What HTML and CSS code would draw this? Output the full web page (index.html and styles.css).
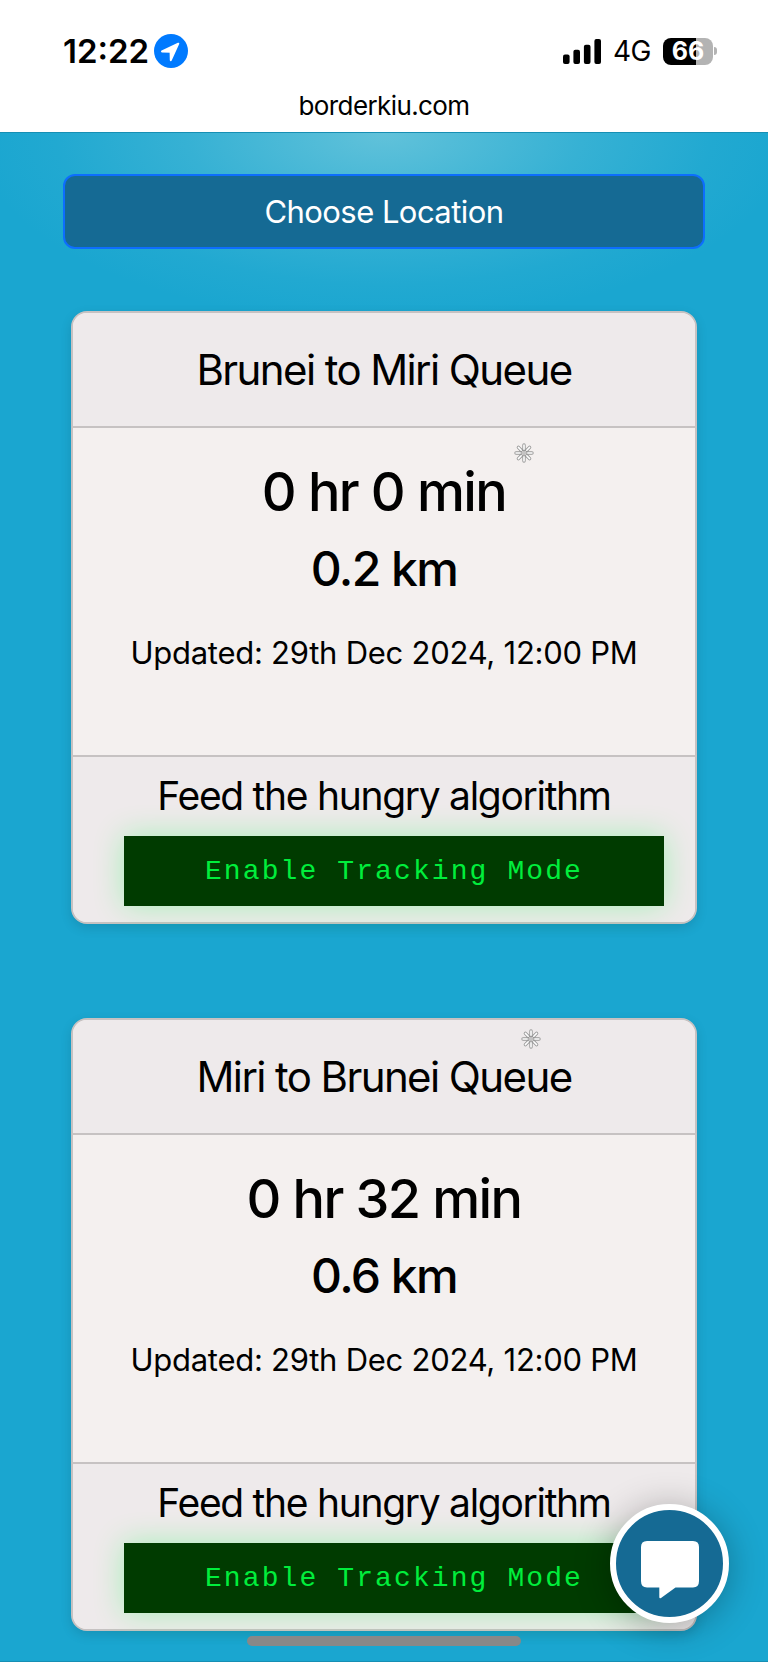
FILE: index.html
```html
<!DOCTYPE html>
<html lang="en">
<head>
    <meta charset="UTF-8">
    <meta name="viewport" content="width=device-width, initial-scale=1.0">
    <title>Border Kiu</title>
    <link rel="stylesheet" href="styles.css">
</head>
<body>
    <header class="phone-header">
        <div class="status-bar">
            <div class="status-left">
                <span class="clock">12:22</span>
                <svg class="location-icon" width="34" height="34" viewBox="0 0 34 34">
                    <circle cx="17" cy="17" r="17" fill="#007aff"/>
                    <path d="M24.3 9.7 L8 17.4 L16.6 17.8 L16.8 26.2 Z" fill="#fff" stroke="#fff" stroke-width="2" stroke-linejoin="round"/>
                </svg>
            </div>
            <div class="status-right">
                <svg class="signal-icon" width="38" height="25" viewBox="0 0 38 25">
                    <rect x="0" y="15.5" width="6.6" height="9.5" rx="2"/>
                    <rect x="10.4" y="10.7" width="6.6" height="14.3" rx="2"/>
                    <rect x="20.9" y="5.7" width="6.6" height="19.3" rx="2"/>
                    <rect x="31.4" y="0" width="6.6" height="25" rx="2"/>
                </svg>
                <span class="network">4G</span>
                <span class="battery">66</span>
                <span class="battery-tip"></span>
            </div>
        </div>
        <div class="address">borderkiu.com</div>
    </header>

    <main class="page">
        <button class="choose-location">Choose Location</button>

        <section class="card">
            <h2 class="card-header">Brunei to Miri Queue</h2>
            <div class="card-body">
                <p class="wait-time">0 hr 0 min</p>
                <p class="distance">0.2 km</p>
                <p class="updated">Updated: 29th Dec 2024, 12:00 PM</p>
            </div>
            <div class="card-footer">
                <p class="feed">Feed the hungry algorithm</p>
                <button class="tracking">Enable Tracking Mode</button>
            </div>
        </section>

        <section class="card">
            <h2 class="card-header">Miri to Brunei Queue</h2>
            <div class="card-body">
                <p class="wait-time">0 hr 32 min</p>
                <p class="distance">0.6 km</p>
                <p class="updated">Updated: 29th Dec 2024, 12:00 PM</p>
            </div>
            <div class="card-footer">
                <p class="feed">Feed the hungry algorithm</p>
                <button class="tracking">Enable Tracking Mode</button>
            </div>
        </section>
    </main>

    <!-- falling snow -->
    <svg class="snowflake flake-one" width="22" height="22" viewBox="-11 -11 22 22">
        <path class="flake-edge" d="M0 -3.8V-8M0 3.8V8M-3.8 0H-8M3.8 0H8M-2.8 -2.8L-5.6 -5.6M2.8 2.8L5.6 5.6M-2.8 2.8L-5.6 5.6M2.8 -2.8L5.6 -5.6M0 0V0"/>
        <path class="flake-fill" d="M0 -3.8V-8M0 3.8V8M-3.8 0H-8M3.8 0H8M-2.8 -2.8L-5.6 -5.6M2.8 2.8L5.6 5.6M-2.8 2.8L-5.6 5.6M2.8 -2.8L5.6 -5.6M0 0V0"/>
    </svg>
    <svg class="snowflake flake-two" width="22" height="22" viewBox="-11 -11 22 22">
        <path class="flake-edge" d="M0 -3.8V-8M0 3.8V8M-3.8 0H-8M3.8 0H8M-2.8 -2.8L-5.6 -5.6M2.8 2.8L5.6 5.6M-2.8 2.8L-5.6 5.6M2.8 -2.8L5.6 -5.6M0 0V0"/>
        <path class="flake-fill" d="M0 -3.8V-8M0 3.8V8M-3.8 0H-8M3.8 0H8M-2.8 -2.8L-5.6 -5.6M2.8 2.8L5.6 5.6M-2.8 2.8L-5.6 5.6M2.8 -2.8L5.6 -5.6M0 0V0"/>
    </svg>

    <button class="chat" aria-label="Chat">
        <svg width="58" height="58" viewBox="0 0 58 58">
            <path d="M6 0H52Q58 0 58 6V40Q58 46.5 52 46.5H34.5L20 57Q18.3 58 18.3 56V46.5H6Q0 46.5 0 40V6Q0 0 6 0Z" fill="#fff"/>
        </svg>
    </button>
    <div class="home-indicator"></div>
</body>
</html>
```

FILE: styles.css
```css
* {
    box-sizing: border-box;
}
body {
    position: relative;
    margin: 0;
    height: 1662px;
    overflow: hidden;
    font-family: Inter, sans-serif;
    color: #000;
    background-color: #1aa6d0;
}
h2, p {
    margin: 0;
    font-weight: 400;
}
button {
    padding: 0;
    font-family: inherit;
}
.phone-header {
    height: 132px;
    background-color: #fff;
}
.status-bar {
    display: flex;
    justify-content: space-between;
    height: 84px;
    padding: 31px 51px 0 63px;
}
.status-left,
.status-right {
    display: flex;
    align-items: center;
    height: 40px;
}
.clock {
    font-size: 33px;
    font-weight: 600;
    line-height: 40px;
}
.location-icon {
    margin-left: 5px;
}
.network {
    margin-left: 12px;
    font-size: 28px;
    letter-spacing: -0.5px;
    line-height: 40px;
}
.battery {
    width: 50px;
    height: 27px;
    margin-left: 12px;
    border-radius: 8px;
    background: linear-gradient(to right, #000 33px, #b3b3b3 33px);
    color: #fff;
    font-size: 25px;
    font-weight: 700;
    line-height: 27px;
    text-align: center;
}
.battery-tip {
    width: 3px;
    height: 8px;
    margin-left: 1px;
    border-radius: 0 3px 3px 0;
    background-color: #b3b3b3;
}
.address {
    font-size: 26px;
    letter-spacing: -0.6px;
    line-height: 44px;
    text-align: center;
}
.page {
    display: flex;
    flex-direction: column;
    align-items: center;
    height: 1530px;
    padding-top: 41px;
    border-top: 1px solid #168fb4;
    border-bottom: 1px solid #168fb4;
    background: radial-gradient(ellipse 410px 190px at 50% 0, #61c2da, rgba(97, 194, 218, 0.4) 48%, rgba(97, 194, 218, 0.1) 80%, rgba(97, 194, 218, 0)) no-repeat;
}
.choose-location {
    flex: none;
    width: 642px;
    height: 75px;
    margin-bottom: 62px;
    border: 2px solid #0d6efd;
    border-radius: 12px;
    background-color: #156a94;
    color: #fff;
    font-size: 31px;
    letter-spacing: -0.55px;
}
.card {
    flex: none;
    width: 626px;
    height: 613px;
    margin-bottom: 94px;
    border: 2px solid #c6c2c2;
    border-radius: 16px;
    background-color: #f4f0ef;
    box-shadow: 0 4px 12px rgba(0, 0, 0, 0.12);
    text-align: center;
}
.card-header {
    height: 115px;
    border-bottom: 2px solid #c6c2c2;
    border-radius: 14px 14px 0 0;
    background-color: #eeeaeb;
    font-size: 42px;
    letter-spacing: -1.6px;
    line-height: 113px;
}
.card-body {
    height: 327px;
    padding-top: 31px;
}
.wait-time {
    font-size: 54px;
    font-weight: 500;
    letter-spacing: -1.6px;
    line-height: 66px;
}
.distance {
    margin-top: 15px;
    font-size: 48px;
    font-weight: 500;
    letter-spacing: -1.6px;
    line-height: 58px;
}
.updated {
    margin-top: 35px;
    font-size: 31px;
    letter-spacing: -0.25px;
    line-height: 40px;
}
.card-footer {
    height: 167px;
    padding-top: 16px;
    border-top: 2px solid #c6c2c2;
    border-radius: 0 0 14px 14px;
    background-color: #eeeaeb;
}
.feed {
    font-size: 39px;
    letter-spacing: -1.3px;
    line-height: 46px;
}
.tracking {
    display: block;
    width: 540px;
    height: 70px;
    margin: 17px 0 0 51px;
    border: 0;
    background-color: #003b00;
    box-shadow: 0 0 30px rgba(0, 255, 65, 0.3);
    color: #00ee3c;
    font-family: "Courier New", "Liberation Mono", monospace;
    font-size: 28px;
    letter-spacing: 2.1px;
}
.snowflake {
    position: absolute;
    fill: none;
    stroke-linecap: round;
}
.flake-edge {
    stroke: #999;
    stroke-width: 3.4;
}
.flake-fill {
    stroke: #fff;
    stroke-width: 1.6;
}
.flake-one {
    top: 442px;
    left: 513px;
}
.flake-two {
    top: 1028px;
    left: 520px;
}
.chat {
    position: absolute;
    top: 1504px;
    left: 610px;
    display: flex;
    align-items: flex-start;
    justify-content: center;
    width: 119px;
    height: 119px;
    padding-top: 31px;
    border: 6px solid #fff;
    border-radius: 50%;
    background-color: #156a94;
    box-shadow: 0 4px 36px rgba(0, 0, 0, 0.3);
}
.home-indicator {
    position: absolute;
    bottom: 16px;
    left: 247px;
    width: 274px;
    height: 10px;
    border-radius: 5px;
    background-color: #888;
}
```
